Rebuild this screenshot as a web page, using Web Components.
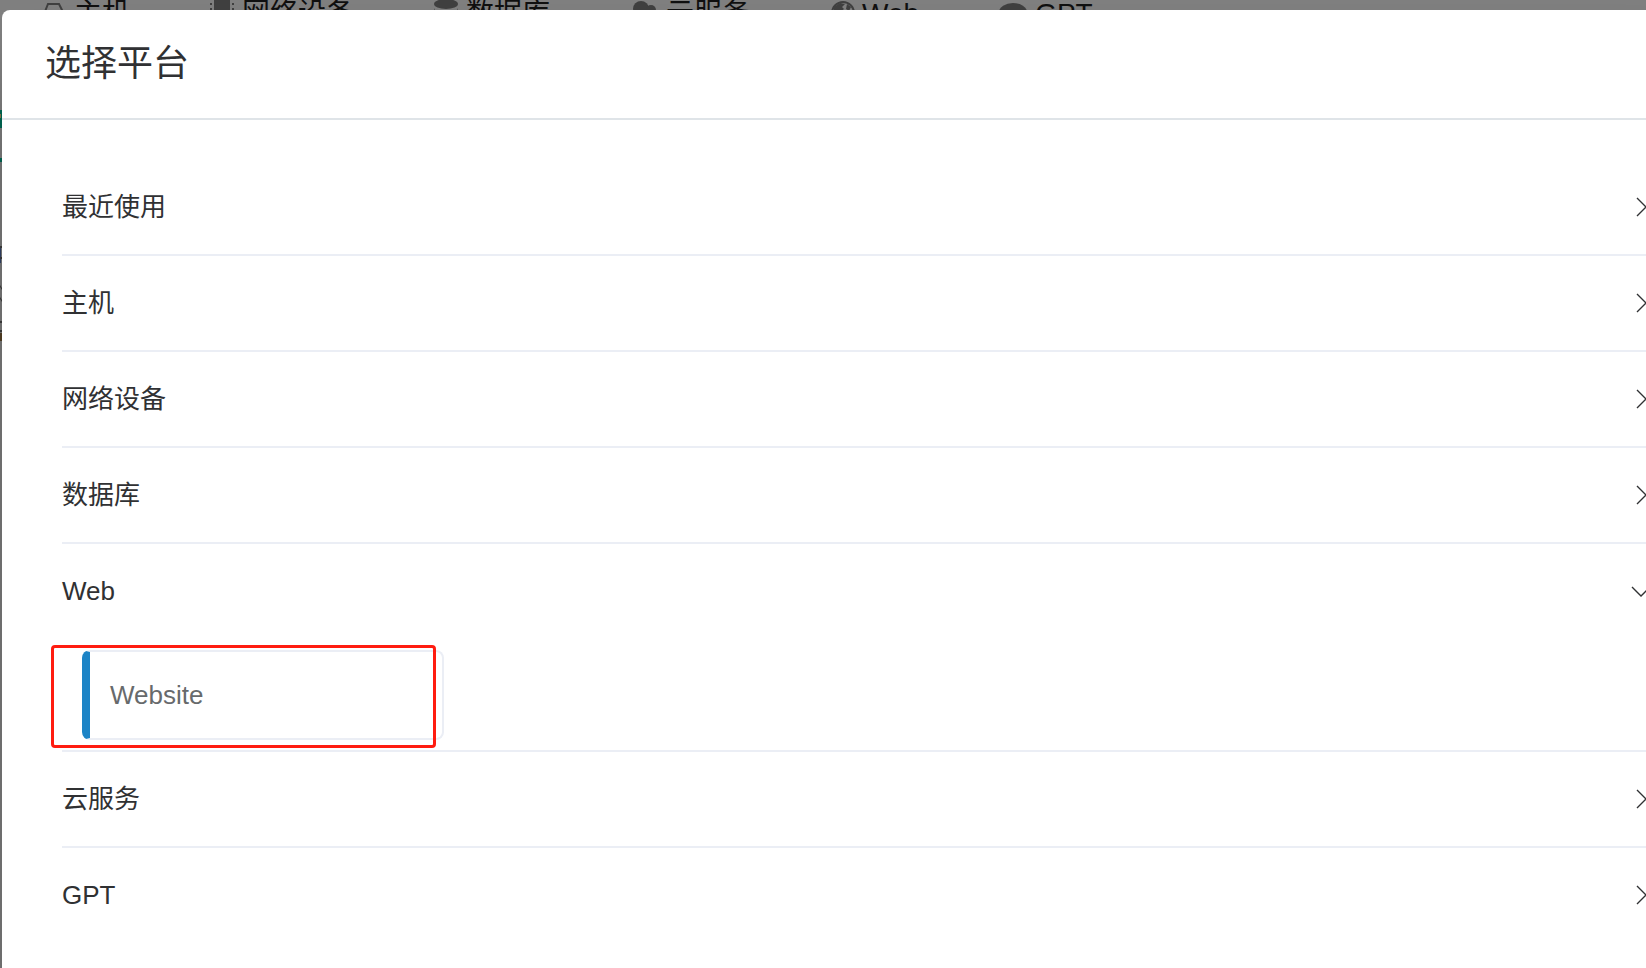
<!DOCTYPE html>
<html lang="zh-CN">
<head>
<meta charset="utf-8">
<title>选择平台</title>
<style>
html, body { margin: 0; height: 100%; overflow: hidden; }
body { background: #808080; color: #303133; font-family: "Liberation Sans", "Noto Sans CJK SC", sans-serif; }
</style>
</head>
<body>
<platform-page></platform-page>
<script>
const define = (name, html, setup) => {
  const template = document.createElement('template');
  template.innerHTML = html;
  customElements.define(name, class extends HTMLElement {
    constructor() {
      super();
      this.attachShadow({ mode: 'open' }).append(template.content.cloneNode(true));
    }
    connectedCallback() { if (setup) setup(this, this.shadowRoot); }
  });
};

define('category-tab', `
<style>
:host { display: block; }
a { display: flex; align-items: center; gap: 8px; color: #101010; text-decoration: none; font-size: 28px; line-height: 28px; white-space: nowrap; }
::slotted(svg) { display: block; flex: none; overflow: visible; }
</style>
<a href="#"><slot name="icon"></slot><slot></slot></a>`);

define('category-tabs', `
<style>
:host { display: flex; gap: 80px; padding-left: 42px; }
svg { color: #404040; height: 24px; }
</style>
<category-tab><svg slot="icon" width="24" viewBox="0 0 24 24" fill="none" stroke="currentColor" stroke-width="2"><path d="M2 12 6 2h11l5 10v8H2z"/></svg>主机</category-tab>
<category-tab><svg slot="icon" width="24" viewBox="0 0 24 24" fill="currentColor"><path d="M4-3h16v26H4z"/><path d="M0 1h2v2H0zm0 5h2v2H0zm0 5h2v2H0zm0 5h2v2H0zM22 1h2v2h-2zm0 5h2v2h-2zm0 5h2v2h-2zm0 5h2v2h-2z"/></svg>网络设备</category-tab>
<category-tab><svg slot="icon" width="24" viewBox="0 0 24 24" fill="currentColor"><ellipse cx="12" cy="2" rx="12" ry="5"/><path d="M0 6q0 5 12 5t12-5v4q0 4-12 4T0 10zm0 7q0 5 12 5t12-5v4q0 4-12 4T0 17z"/></svg>数据库</category-tab>
<category-tab><svg slot="icon" width="28" viewBox="0 0 28 24" fill="currentColor"><circle cx="11" cy="7" r="8"/><circle cx="21" cy="8" r="5"/><path d="M2 8h25v9H2z"/></svg>云服务</category-tab>
<category-tab><svg slot="icon" width="24" viewBox="0 0 24 24"><circle cx="13" cy="11" r="11" fill="none" stroke="currentColor" stroke-width="2"/><path fill="currentColor" d="m4 5 6-4 5 1-3 3 2 2-5 4-5-1zm13-3 4 3-2 4-3-2z"/></svg>Web</category-tab>
<category-tab><svg slot="icon" width="28" viewBox="0 0 28 24" fill="currentColor"><ellipse cx="14" cy="10" rx="14" ry="9"/></svg>GPT</category-tab>`);

define('platform-card', `
<style>
:host { display: block; }
button { display: block; box-sizing: border-box; width: 100%; height: 90px; padding: 0 20px; border: 2px solid #ebeef5; border-left: 8px solid #1c84c6; border-radius: 8px; background: #fff; color: #676a6c; font: inherit; font-size: 26px; text-align: left; }
</style>
<button type="button"><slot></slot></button>`);

define('platform-group', `
<style>
:host { display: block; border-bottom: 2px solid #ebeef5; }
:host([last]) { border-bottom-color: transparent; }
button { display: flex; align-items: center; justify-content: space-between; width: 100%; height: 94px; padding: 0; border: 0; background: none; color: #303133; font: inherit; font-size: 26px; line-height: 32px; text-align: left; }
svg { width: 24px; height: 24px; fill: none; stroke: #303133; stroke-width: 1.4; flex: none; }
:host([open]) svg { transform: rotate(90deg); }
.content { display: none; }
:host([open]) .content { display: block; padding: 12px 0 10px 20px; }
</style>
<button type="button" aria-expanded="false"><span></span><svg viewBox="0 0 24 24" aria-hidden="true"><path d="m8 3 9 9-9 9"/></svg></button>
<div class="content"><slot></slot></div>`, (host, root) => {
  root.querySelector('span').textContent = host.getAttribute('label');
  const button = root.querySelector('button');
  button.setAttribute('aria-expanded', host.hasAttribute('open'));
  button.onclick = () => button.setAttribute('aria-expanded', host.toggleAttribute('open'));
});

define('platform-dialog', `
<style>
:host { display: block; background: #fff; border-radius: 8px 0 0 0; box-shadow: 0 80px 100px rgba(0,0,0,.3); }
header { padding: 0 43px; border-bottom: 2px solid #dfe4e8; }
h1 { margin: 0; font-size: 36px; line-height: 108px; font-weight: 400; }
main { padding: 40px 53px 40px 60px; }
</style>
<header><h1>选择平台</h1></header>
<main><slot></slot></main>`);

define('highlight-frame', `
<style>
:host { display: block; position: relative; width: 362px; }
.frame { position: absolute; top: -5px; bottom: -8px; left: -31px; right: 8px; border: 3px solid #ff1c10; border-radius: 4px; pointer-events: none; }
</style>
<slot></slot><div class="frame"></div>`);

define('platform-page', `
<style>
:host { display: block; position: relative; height: 100%; overflow: hidden; }
.edge { position: absolute; left: 0; top: 0; }
platform-dialog { position: absolute; top: 10px; left: 2px; right: -60px; min-height: 100%; }
</style>
<category-tabs></category-tabs>
<svg class="edge" width="2" height="360" viewBox="0 0 2 360" aria-hidden="true"><path fill="#006b56" d="M0 110h2v18H0zm0 48h2v4H0z"/><path fill="#8a7a50" d="M0 114h1v4H0z"/><path fill="#34466c" d="M0 247h1v16H0z"/><path fill="#404040" d="M0 246h2v2H0zm0 11h2v2H0zm0 28 2 3v2l-2-3zm0 12 2 3v2l-2-3zm0 24h2v2H0zm0 9h2v2H0z"/><path fill="#574226" d="M0 333h2v8H0z"/></svg>
<platform-dialog>
<platform-group label="最近使用"></platform-group>
<platform-group label="主机"></platform-group>
<platform-group label="网络设备"></platform-group>
<platform-group label="数据库"></platform-group>
<platform-group label="Web" open><highlight-frame><platform-card>Website</platform-card></highlight-frame></platform-group>
<platform-group label="云服务"></platform-group>
<platform-group label="GPT" last></platform-group>
</platform-dialog>`);
</script>
</body>
</html>
